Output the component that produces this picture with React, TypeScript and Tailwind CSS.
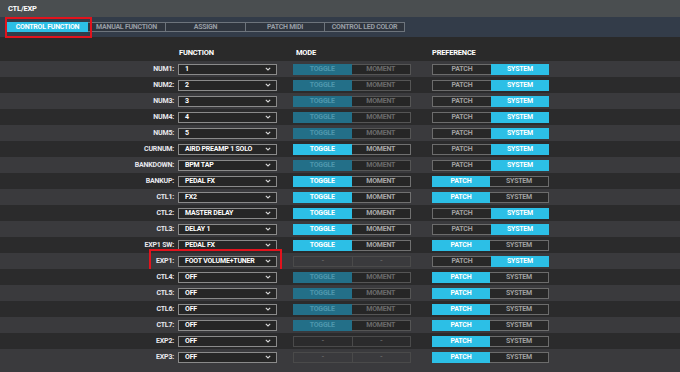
import React from "react";

type Mode = "dim" | "on" | "none";
type Pref = "patch" | "system";

const ROWS: { label: string; fn: string; mode: Mode; pref: Pref }[] = [
  { label: "NUM1:", fn: "1", mode: "dim", pref: "system" },
  { label: "NUM2:", fn: "2", mode: "dim", pref: "system" },
  { label: "NUM3:", fn: "3", mode: "dim", pref: "system" },
  { label: "NUM4:", fn: "4", mode: "dim", pref: "system" },
  { label: "NUM5:", fn: "5", mode: "dim", pref: "system" },
  { label: "CURNUM:", fn: "AIRD PREAMP 1 SOLO", mode: "on", pref: "system" },
  { label: "BANKDOWN:", fn: "BPM TAP", mode: "dim", pref: "system" },
  { label: "BANKUP:", fn: "PEDAL FX", mode: "on", pref: "patch" },
  { label: "CTL1:", fn: "FX2", mode: "on", pref: "patch" },
  { label: "CTL2:", fn: "MASTER DELAY", mode: "on", pref: "system" },
  { label: "CTL3:", fn: "DELAY 1", mode: "on", pref: "system" },
  { label: "EXP1 SW:", fn: "PEDAL FX", mode: "on", pref: "patch" },
  { label: "EXP1:", fn: "FOOT VOLUME+TUNER", mode: "none", pref: "system" },
  { label: "CTL4:", fn: "OFF", mode: "dim", pref: "patch" },
  { label: "CTL5:", fn: "OFF", mode: "dim", pref: "patch" },
  { label: "CTL6:", fn: "OFF", mode: "dim", pref: "patch" },
  { label: "CTL7:", fn: "OFF", mode: "dim", pref: "patch" },
  { label: "EXP2:", fn: "OFF", mode: "none", pref: "patch" },
  { label: "EXP3:", fn: "OFF", mode: "none", pref: "patch" },
];

const TABS = [
  { name: "CONTROL FUNCTION", w: "w-[81px]" },
  { name: "MANUAL FUNCTION", w: "w-[78px]" },
  { name: "ASSIGN", w: "w-[80px]" },
  { name: "PATCH MIDI", w: "w-[79px]" },
  { name: "CONTROL LED COLOR", w: "w-[80px]" },
];

function Chevron() {
  return (
    <svg width="6" height="4" viewBox="0 0 6 4" className="shrink-0">
      <polyline points="0.8,0.8 3,3 5.2,0.8" fill="none" stroke="#d8d8d8" strokeWidth="1.1" />
    </svg>
  );
}

function ModeSwitch({ mode }: { mode: Mode }) {
  if (mode === "none") {
    return (
      <div className="flex h-[11px] w-[118px]">
        <div className="flex flex-1 items-center justify-center border border-[#4a4a4a] text-[#666]">-</div>
        <div className="flex flex-1 items-center justify-center border border-l-0 border-[#4a4a4a] text-[#666]">-</div>
      </div>
    );
  }
  const on = mode === "on";
  return (
    <div className="flex h-[11px] w-[118px]">
      <div
        className={
          on
            ? "flex flex-1 items-center justify-center bg-[#2cbfe6] text-white"
            : "flex flex-1 items-center justify-center bg-[#236f88] text-[#4f97ad]"
        }
      >
        TOGGLE
      </div>
      <div
        className={
          on
            ? "flex flex-1 items-center justify-center border border-l-0 border-[#707070] bg-[#262626] text-[#a8a8a8]"
            : "flex flex-1 items-center justify-center border border-l-0 border-[#555] bg-[#262626] text-[#6a6a6a]"
        }
      >
        MOMENT
      </div>
    </div>
  );
}

function PrefSwitch({ pref }: { pref: Pref }) {
  const active = "flex flex-1 items-center justify-center bg-[#2cbfe6] text-white";
  const idle = "flex flex-1 items-center justify-center border border-[#6c6c6c] bg-[#282828] text-[#a0a0a0]";
  return (
    <div className="flex h-[11px] w-[117px]">
      <div className={pref === "patch" ? active : idle + " border-r-0"}>PATCH</div>
      <div className={pref === "system" ? active : idle + " border-l-0"}>SYSTEM</div>
    </div>
  );
}

export default function App() {
  return (
    <div
      className="relative flex h-[372px] w-[680px] flex-col overflow-hidden bg-[#3a3a3d] text-[7px] font-bold leading-none tracking-[-0.2px] text-[#e6e6e6]"
      style={{ fontFamily: "Roboto, 'Liberation Sans', sans-serif" }}
    >
      {/* title */}
      <div className="flex h-[17px] items-center bg-[#4a4e50] pl-[8px] text-[7.5px] text-white">CTL/EXP</div>

      {/* tabs */}
      <div className="relative flex h-[20px] items-center bg-[#333c49] pl-[7px] tracking-[-0.25px]">
        {TABS.map((t, i) => (
          <div
            key={t.name}
            className={
              i === 0
                ? `flex h-[10px] ${t.w} items-center justify-center bg-[#2cbfe6] text-white`
                : `flex h-[10px] ${t.w} items-center justify-center border border-l-0 border-[#6d747c] bg-[#2f353e] text-[#979da5]`
            }
          >
            {t.name}
          </div>
        ))}
        <div className="absolute left-[5px] top-0 h-[21px] w-[87px] border-2 border-[#e2131d]" />
      </div>

      {/* column headers */}
      <div className="flex h-[24px] items-end bg-[#2a2a2a] pb-[5px] text-[7.5px] text-white">
        <div className="ml-[179px] w-[117px]">FUNCTION</div>
        <div className="w-[136px]">MODE</div>
        <div>PREFERENCE</div>
      </div>

      {/* rows */}
      {ROWS.map((r, i) => (
        <div
          key={r.label}
          className={`relative flex h-[16px] shrink-0 items-center ${i % 2 === 0 ? "bg-[#3a3a3d]" : "bg-[#2b2b2c]"}`}
        >
          <div className="w-[175px] pr-[1px] text-right text-[#e8e8ee]">{r.label}</div>
          <div className="ml-[3px] flex h-[11px] w-[99px] items-center justify-between border border-[#8a8a8a] bg-[#262626] pl-[6px] pr-[5px] text-white">
            <span>{r.fn}</span>
            <Chevron />
          </div>
          <div className="ml-[16px]">
            <ModeSwitch mode={r.mode} />
          </div>
          <div className="ml-[21px]">
            <PrefSwitch pref={r.pref} />
          </div>
          {r.label === "EXP1:" && (
            <div className="absolute left-[149px] top-[-4px] h-[22px] w-[133px] border-[2.5px] border-[#e2131d]" />
          )}
        </div>
      ))}
    </div>
  );
}
